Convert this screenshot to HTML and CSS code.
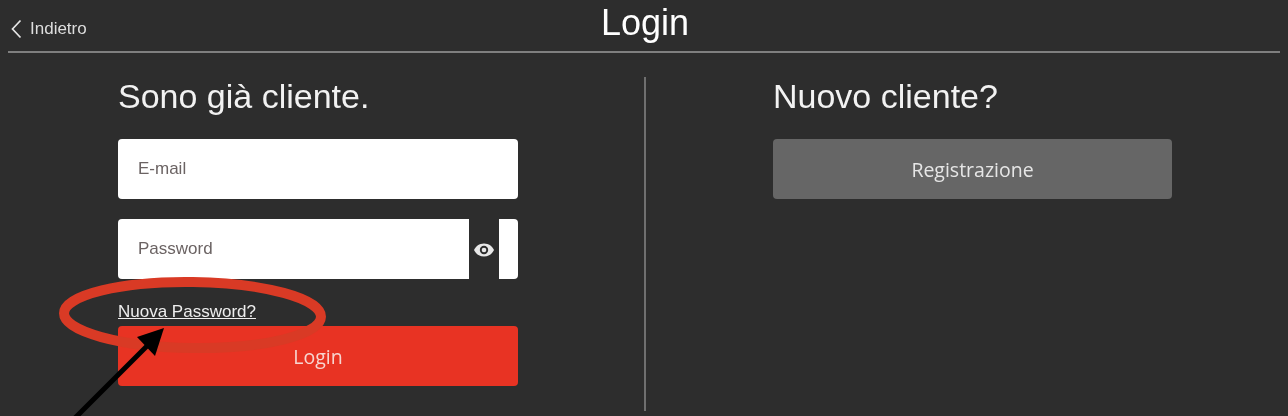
FILE: index.html
```html
<!DOCTYPE html><html lang="it">
<head>
  <meta charset="UTF-8" />
  <meta name="viewport" content="width=device-width, initial-scale=1.0" />
  <title>Login</title>
  <link rel="stylesheet" href="styles.css">
</head>
<body>
  <header class="top-bar">
    <a class="back-link">
      <svg class="back-icon" width="12" height="20" viewBox="0 0 12 20"><path d="M10.500 1.500 L2.500 10 L10.500 18.500" fill="none" stroke="#e6e6e6" stroke-width="1.700"/></svg>
      Indietro
    </a>
    <h1>Login</h1>
  </header>
  <main class="columns">
    <section class="col col-left">
      <div class="col-inner">
        <h2>Sono già cliente.</h2>
        <div class="field">E-mail</div>
        <div class="password-row">
          <div class="field field-pass">Password</div>
          <div class="eye-box">
            <svg width="22" height="16" viewBox="0 0 22 16"><path d="M11 1.500C6.300 1.500 2.700 4.300 1 8c1.700 3.700 5.300 6.500 10 6.500S19.300 11.700 21 8c-1.700-3.700-5.300-6.500-10-6.500z" fill="#e8e8e8"/><circle cx="11" cy="8" r="4.200" fill="#2d2d2d"/><circle cx="11" cy="8" r="2.300" fill="#e8e8e8"/></svg>
          </div>
          <div class="pass-cap"></div>
        </div>
        <a class="forgot-link">Nuova Password?</a>
        <button class="btn btn-red">Login</button>
      </div>
    </section>
    <section class="col col-right">
      <div class="col-inner col-inner-right">
        <h2>Nuovo cliente?</h2>
        <button class="btn btn-grey">Registrazione</button>
      </div>
    </section>
  </main>
  <svg class="annotation" width="1288" height="416" viewBox="0 0 1288 416">
    <ellipse cx="192.500" cy="315" rx="128.500" ry="33" transform="rotate(0.800 192 315)" fill="none" stroke="#d93a25" stroke-width="10"/>
    <line x1="75" y1="418" x2="148" y2="345" stroke="#000" stroke-width="5"/>
    <polygon points="164,328 137,337 155,356" fill="#000"/>
  </svg>
</body>
</html>
```

FILE: styles.css
```css
html, body {
  height: 416px;
  overflow: hidden;
}
body {
  font-family: 'Liberation Sans', Arial, sans-serif;
  margin: 0;
  padding: 0 8px;
  background: #2d2d2d;
  color: #fff;
  position: relative;
}
.top-bar {
  height: 51px;
  border-bottom: 2px solid #7f7f7f;
  display: flex;
  align-items: center;
  justify-content: center;
  position: relative;
  filter: blur(0.4px);
}
.top-bar h1 {
  margin: 0 0 5px 2px;
  font-size: 36px;
  font-weight: normal;
  color: #fff;
}
.back-link {
  position: absolute;
  left: 2px;
  top: 19px;
  display: flex;
  align-items: center;
  gap: 8px;
  font-size: 17px;
  color: #dedede;
  line-height: 20px;
}
.columns {
  display: flex;
  padding-top: 24px;
  filter: blur(0.4px);
}
.col {
  height: 334px;
}
.col-left {
  width: 638px;
  border-right: 2px solid #6f6f6f;
  padding-left: 110px;
  box-sizing: border-box;
}
.col-right {
  padding-left: 127px;
}
.col-inner {
  width: 400px;
}
.col-inner-right {
  width: 399px;
}
h2 {
  margin: 0 0 23px;
  font-size: 34px;
  font-weight: normal;
  line-height: 39px;
  color: #f2f2f2;
}
.field {
  height: 60px;
  line-height: 60px;
  background: #fff;
  border-radius: 4px;
  padding-left: 20px;
  font-size: 17px;
  color: #6b6363;
  margin-bottom: 20px;
}
.password-row {
  display: flex;
  height: 60px;
}
.field-pass {
  width: 351px;
  box-sizing: border-box;
  border-radius: 4px 0 0 4px;
  margin: 0;
}
.eye-box {
  width: 30px;
  display: flex;
  align-items: center;
  justify-content: center;
  padding-top: 2px;
  box-sizing: border-box;
}
.pass-cap {
  width: 19px;
  background: #fff;
  border-radius: 0 4px 4px 0;
}
.forgot-link {
  display: block;
  margin-top: 23px;
  margin-bottom: 5px;
  font-size: 17px;
  line-height: 19px;
  color: #eeeeee;
  text-decoration: underline;
}
.btn {
  display: block;
  width: 100%;
  height: 60px;
  border: none;
  border-radius: 4px;
  font-family: 'Open Sans', sans-serif;
  font-size: 19.500px;
  cursor: pointer;
}
.btn-red {
  background: #e83323;
  color: #f7d5d0;
}
.btn-grey {
  background: #666666;
  color: #e6e6e6;
}
.annotation {
  position: absolute;
  left: 0;
  top: 0;
}
```
